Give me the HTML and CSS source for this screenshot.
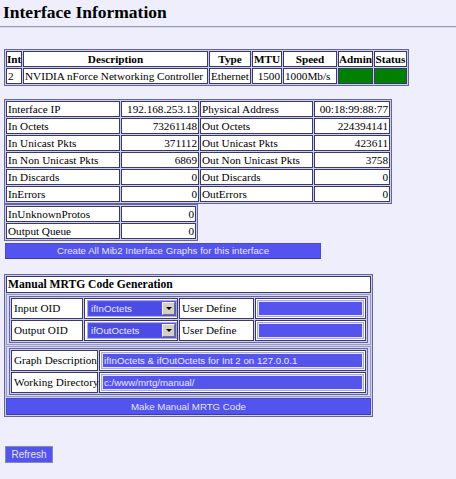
FILE: index.html
```html
<!DOCTYPE html>
<html>
<head>
<meta charset="utf-8">
<title>Interface Information</title>
<link rel="stylesheet" href="styles.css">
</head>
<body>
<h1 class="title">Interface Information</h1>
<hr class="rule">

<table class="grid t-iface">
  <tr>
    <th class="w-int">Int</th>
    <th class="w-desc">Description</th>
    <th class="w-type">Type</th>
    <th class="w-mtu">MTU</th>
    <th class="w-speed">Speed</th>
    <th class="w-admin">Admin</th>
    <th class="w-status">Status</th>
  </tr>
  <tr>
    <td>2</td>
    <td>NVIDIA nForce Networking Controller</td>
    <td>Ethernet</td>
    <td class="num">1500</td>
    <td>1000Mb/s</td>
    <td class="ok"></td>
    <td class="ok"></td>
  </tr>
</table>

<table class="grid t-stats">
  <tr><td class="w-l1">Interface IP</td><td class="num w-v1">192.168.253.13</td><td class="w-l2">Physical Address</td><td class="num w-v2">00:18:99:88:77</td></tr>
  <tr><td>In Octets</td><td class="num">73261148</td><td>Out Octets</td><td class="num">224394141</td></tr>
  <tr><td>In Unicast Pkts</td><td class="num">371112</td><td>Out Unicast Pkts</td><td class="num">423611</td></tr>
  <tr><td>In Non Unicast Pkts</td><td class="num">6869</td><td>Out Non Unicast Pkts</td><td class="num">3758</td></tr>
  <tr><td>In Discards</td><td class="num">0</td><td>Out Discards</td><td class="num">0</td></tr>
  <tr><td>InErrors</td><td class="num">0</td><td>OutErrors</td><td class="num">0</td></tr>
</table>

<table class="grid t-extra">
  <tr><td class="w-l1">InUnknownProtos</td><td class="num w-v3">0</td></tr>
  <tr><td>Output Queue</td><td class="num">0</td></tr>
</table>

<button class="btn btn-graphs" type="button">Create All Mib2 Interface Graphs for this interface</button>

<table class="grid t-mrtg">
  <tr><th class="mrtg-head">Manual MRTG Code Generation</th></tr>
  <tr>
    <td class="wrap">
      <table class="grid inner">
        <tr>
          <td class="w-oid lbl">Input OID</td>
          <td class="w-sel selcell">
            <div class="fsel"><span class="fsel-text">ifInOctets</span><span class="fsel-arrow"><span class="tri"></span></span></div>
          </td>
          <td class="w-ud lbl">User Define</td>
          <td class="w-udin fld"><input class="fin" type="text" value=""></td>
        </tr>
        <tr>
          <td class="lbl">Output OID</td>
          <td class="selcell">
            <div class="fsel"><span class="fsel-text">ifOutOctets</span><span class="fsel-arrow"><span class="tri"></span></span></div>
          </td>
          <td class="lbl">User Define</td>
          <td class="fld"><input class="fin" type="text" value=""></td>
        </tr>
      </table>
    </td>
  </tr>
  <tr>
    <td class="wrap">
      <table class="grid inner">
        <tr>
          <td class="w-gd lbl">Graph Description</td>
          <td class="w-gdin fld"><input class="fin" type="text" value="ifInOctets &amp; ifOutOctets for Int 2 on 127.0.0.1"></td>
        </tr>
        <tr>
          <td class="lbl">Working Directory</td>
          <td class="fld"><input class="fin" type="text" value="c:/www/mrtg/manual/"></td>
        </tr>
      </table>
    </td>
  </tr>
  <tr>
    <td class="btncell"><button class="btn btn-make" type="button">Make Manual MRTG Code</button></td>
  </tr>
</table>

<button class="btn btn-refresh" type="button">Refresh</button>
</body>
</html>
```

FILE: styles.css
```css
body {
  margin: 0;
  background: #eeeefc;
  font-family: "Liberation Serif", "Times New Roman", serif;
  font-size: 11.2px;
  color: #000;
}

.title {
  margin: 0;
  padding: 2px 0 0 3px;
  font-size: 17.5px;
  line-height: 20px;
  font-weight: bold;
}

.rule {
  margin: 4px 0 0;
  height: 0;
  border: 0;
  border-top: 1px solid #9c9cac;
  border-bottom: 1px solid #dadaea;
}

.grid {
  box-sizing: border-box;
  table-layout: fixed;
  border-collapse: separate;
  border-spacing: 1px;
  border: 1px solid #66669a;
  background: #cdcdef;
  margin-left: 4px;
}

.grid th,
.grid td {
  box-sizing: border-box;
  border: 1px solid #3a3a6a;
  background: #fff;
  padding: 0 1px;
  line-height: 14px;
  white-space: nowrap;
  text-align: left;
  font-weight: normal;
}

.grid th {
  font-weight: bold;
  text-align: center;
  padding: 0;
}

.grid td.num { text-align: right; }
.grid td.ok { background: #008000; }

/* interface table */
.t-iface { width: 405px; margin-top: 21px; }
.w-int { width: 16px; }
.w-desc { width: 185px; }
.w-type { width: 42px; }
.w-mtu { width: 30px; }
.w-speed { width: 54px; }
.w-admin { width: 35px; }
.w-status { width: 33px; }

/* stats tables */
.t-stats { width: 388px; margin-top: 13px; }
.w-l1 { width: 114px; }
.w-v1 { width: 78px; }
.w-l2 { width: 113px; }
.w-v2 { width: 76px; }

.t-extra { width: 194px; margin-top: 0; }
.w-v3 { width: 75px; }

/* buttons */
.btn {
  display: block;
  box-sizing: border-box;
  margin: 0;
  padding: 0;
  background: #5353ef;
  color: #e6e6ff;
  font-family: "Liberation Sans", Arial, sans-serif;
  font-size: 9.7px;
  line-height: 14px;
  text-align: center;
  border: 1px solid #4a4acc;
  border-bottom-color: #3a3a99;
}

.btn-graphs {
  width: 316px;
  height: 16px;
  margin: 2px 0 0 5px;
}

/* MRTG box */
.t-mrtg { width: 369px; margin-top: 15px; }

.grid th.mrtg-head {
  text-align: left;
  padding: 0 1px;
  line-height: 15px;
  font-size: 11.6px;
}

.grid td.wrap {
  padding: 1px 2px;
  background: #d8d8f4;
  border: 1px solid #9a9acc;
}

.inner { width: 359px; margin: 0; }

.inner td {
  padding: 1px;
  line-height: 17px;
}

.grid td.lbl { padding: 1px 1px 1px 2px; }

.w-oid { width: 72px; }
.w-sel { width: 94px; }
.w-ud { width: 75px; }
.w-udin { width: 111px; }
.w-gd { width: 87px; }
.w-gdin { width: 267px; }

.grid td.selcell { padding: 1px 0 1px 2px; }

.fsel {
  box-sizing: border-box;
  width: 90px;
  height: 17px;
  display: flex;
  align-items: stretch;
  background: #5555ee;
  border: 1px solid #a8a8dc;
}

.fsel-text {
  flex: 1;
  color: #e8e8ff;
  font-family: "Liberation Sans", Arial, sans-serif;
  font-size: 9.7px;
  line-height: 15px;
  padding-left: 2px;
  background: #4b4be6;
  margin: 1px 0 1px 1px;
  line-height: 13px;
}

.fsel-arrow {
  box-sizing: border-box;
  width: 13px;
  margin: 1px;
  background: #d4d0c8;
  border-top: 1px solid #f4f4f4;
  border-left: 1px solid #f4f4f4;
  border-right: 1px solid #707070;
  border-bottom: 1px solid #707070;
  display: flex;
  align-items: center;
  justify-content: center;
}

.tri {
  width: 0;
  height: 0;
  border-left: 3px solid transparent;
  border-right: 3px solid transparent;
  border-top: 3px solid #000;
}

.grid td.fld { padding: 1px 1px 1px 1px; }

.fin {
  display: block;
  box-sizing: border-box;
  width: 100%;
  height: 17px;
  margin: 0;
  padding: 0 2px;
  background: #5555ee;
  color: #e8e8ff;
  font-family: "Liberation Sans", Arial, sans-serif;
  font-size: 9.7px;
  border: 1px solid #a8a8dc;
  outline: 1px solid #e4e4fa;
  outline-offset: -2px;
}

.grid td.btncell {
  padding: 0;
  border: 0;
  background: #cdcdef;
}

.btn-make {
  width: 100%;
  height: 17px;
}

.btn-refresh {
  width: 48px;
  height: 17px;
  margin: 29px 0 0 5px;
  border: 1px solid #8a8ab0;
  font-size: 10px;
}
```
